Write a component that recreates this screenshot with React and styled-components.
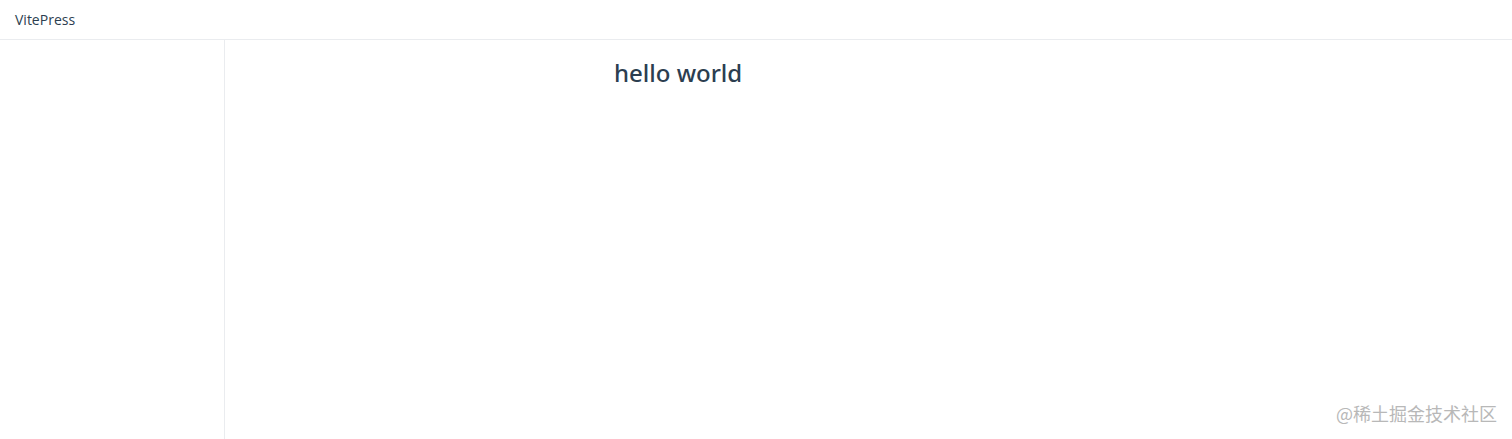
import styled, { createGlobalStyle } from "styled-components";

const Global = createGlobalStyle`
  html, body {
    margin: 0;
    padding: 0;
    background: #fff;
  }
  body {
    font-family: "Open Sans", "Noto Sans", sans-serif;
    color: #2c3e50;
  }
`;

const Page = styled.div`
  position: relative;
  height: 100vh;
  display: flex;
  flex-flow: column;
`;

const NavBar = styled.header`
  height: 39px;
  flex: none;
  display: flex;
  align-items: center;
  padding-left: 15px;
  border-bottom: 1px solid #eaecef;
  font-size: 14px;
  color: #2c3e50;
`;

const Body = styled.div`
  flex: 1;
  display: flex;
  flex-flow: row;
`;

const SideBar = styled.aside`
  width: 224px;
  flex: none;
  border-right: 1px solid #eaecef;
`;

const Content = styled.main`
  flex: 1;
  padding: 16px 0 0 389px;

  h1 {
    margin: 0;
    font-family: "Noto Sans", "Open Sans", sans-serif;
    font-size: 24px;
    font-weight: 500;
    line-height: 34px;
    color: #2c3e50;
  }
`;

const Watermark = styled.div`
  position: absolute;
  right: 15px;
  bottom: 13px;
  font-family: "Noto Sans CJK SC", sans-serif;
  font-size: 18px;
  color: #b8b8b8;
`;

function App() {
  return (
    <Page>
      <Global />
      <NavBar>VitePress</NavBar>
      <Body>
        <SideBar />
        <Content>
          <h1>hello world</h1>
        </Content>
      </Body>
      <Watermark>@稀土掘金技术社区</Watermark>
    </Page>
  );
}

export default App;
